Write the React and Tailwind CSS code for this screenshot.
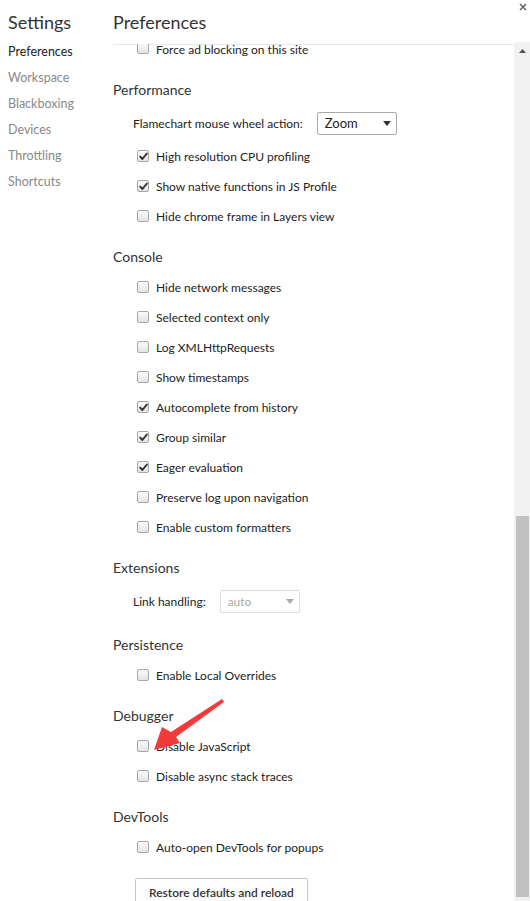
import React from 'react';

const sidebar = ['Preferences', 'Workspace', 'Blackboxing', 'Devices', 'Throttling', 'Shortcuts'];

function Box({ checked }) {
  return (
    <span className="w-[12px] h-[12px] rounded-[2px] border border-[#a6a6a6] bg-gradient-to-b from-[#fbfbfb] to-[#e4e4e4] flex items-center justify-center shrink-0">
      {checked && (
        <svg width="9" height="9" viewBox="0 0 9 9">
          <path d="M1.2 4.6 L3.4 7 L7.8 1.6" fill="none" stroke="#333" strokeWidth="1.9" strokeLinecap="round" strokeLinejoin="round" />
        </svg>
      )}
    </span>
  );
}

function Check({ label, checked }) {
  return (
    <div className="h-[30px] flex items-center pl-[24px] gap-[7px] text-[#222]">
      <Box checked={checked} />
      <span className="pt-[2px]">{label}</span>
    </div>
  );
}

function Section({ title, children }) {
  return (
    <div className="mt-[11px]">
      <div className="h-[30px] flex items-center pb-[2px] text-[14px] text-[#333]">{title}</div>
      {children}
    </div>
  );
}

function Caret({ color }) {
  return (
    <svg width="8" height="5" viewBox="0 0 8 5">
      <path d="M0 0 H8 L4 5 Z" fill={color} />
    </svg>
  );
}

export default function App() {
  return (
    <div className="relative w-[530px] h-[901px] bg-white overflow-hidden flex text-[12px]" style={{ fontFamily: 'Lato, "Open Sans", sans-serif' }}>
      <div className="w-[113px] shrink-0 pl-[8px]">
        <div className="h-[45px] flex items-center text-[18px] text-[#333]">Settings</div>
        <div className="flex flex-col -mt-[6px]">
          {sidebar.map((s, i) => (
            <div key={s} className={'h-[26px] flex items-center text-[12.5px] ' + (i === 0 ? 'text-[#222]' : 'text-[#888]')}>{s}</div>
          ))}
        </div>
      </div>

      <div className="flex-1 flex flex-col min-w-0">
        <div className="h-[45px] shrink-0 flex items-center text-[18px] text-[#333] border-b border-[#e6e6e6] mr-[16px]">Preferences</div>
        <div className="flex-1">
          {/* partly scrolled-away first row */}
          <div className="h-[19px]">
            <div className="h-[8px] flex items-center pl-[24px] gap-[7px] text-[#222]">
              <span className="h-[10px] overflow-hidden flex items-end shrink-0"><Box /></span>
              <span className="leading-none pt-[1px]">Force ad blocking on this site</span>
            </div>
          </div>

          <Section title="Performance">
            <div className="h-[36px] flex items-center pl-[20px] gap-[14px] text-[#222]">
              <span className="pt-[2px]">Flamechart mouse wheel action:</span>
              <div className="w-[80px] h-[23px] border border-[#a9a9a9] rounded-[2px] flex items-center justify-between pl-[7px] pr-[5px] text-[13px] text-[#222]">
                <span className="pt-[1px]">Zoom</span>
                <Caret color="#333" />
              </div>
            </div>
            <Check label="High resolution CPU profiling" checked />
            <Check label="Show native functions in JS Profile" checked />
            <Check label="Hide chrome frame in Layers view" />
          </Section>

          <Section title="Console">
            <Check label="Hide network messages" />
            <Check label="Selected context only" />
            <Check label="Log XMLHttpRequests" />
            <Check label="Show timestamps" />
            <Check label="Autocomplete from history" checked />
            <Check label="Group similar" checked />
            <Check label="Eager evaluation" checked />
            <Check label="Preserve log upon navigation" />
            <Check label="Enable custom formatters" />
          </Section>

          <Section title="Extensions">
            <div className="h-[36px] flex items-center pl-[20px] gap-[14px] text-[#222]">
              <span className="pt-[2px]">Link handling:</span>
              <div className="w-[80px] h-[23px] border border-[#dcdcdc] rounded-[2px] flex items-center justify-between pl-[7px] pr-[5px] text-[#aaa]">
                <span className="pt-[1px]">auto</span>
                <Caret color="#aaa" />
              </div>
            </div>
          </Section>

          <Section title="Persistence">
            <Check label="Enable Local Overrides" />
          </Section>

          <Section title="Debugger">
            <Check label="Disable JavaScript" />
            <Check label="Disable async stack traces" />
          </Section>

          <Section title="DevTools">
            <Check label="Auto-open DevTools for popups" />
          </Section>

          <div className="pl-[22px] pt-[16px]">
            <button className="h-[30px] px-[13px] border border-[#c8c8c8] rounded-[2px] bg-[#fdfdfd] text-[#333] text-[12px] font-semibold">
              Restore defaults and reload
            </button>
          </div>
        </div>
      </div>

      {/* scrollbar */}
      <div className="absolute right-0 top-[42px] bottom-0 w-[16px] bg-[#f1f1f1]">
        <div className="flex justify-center pt-[7px]">
          <svg width="7" height="4" viewBox="0 0 7 4"><path d="M0 4 L3.5 0 L7 4 Z" fill="#505050" /></svg>
        </div>
        <div className="absolute left-[2px] right-[1px] top-[474px] bottom-[4px] bg-[#c1c1c1]" />
      </div>

      {/* close */}
      <svg className="absolute right-[3px] top-[3px]" width="8" height="8" viewBox="0 0 8 8">
        <path d="M1 1 L7 7 M7 1 L1 7" stroke="#666" strokeWidth="1.6" />
      </svg>

      {/* red annotation arrow */}
      <svg className="absolute left-0 top-0 pointer-events-none" width="530" height="901">
        <path d="M222 699 L224 702 L176 737 L180 743 L154 750 L162 727 L171 732 Z" fill="#f23a3a" />
      </svg>
    </div>
  );
}
